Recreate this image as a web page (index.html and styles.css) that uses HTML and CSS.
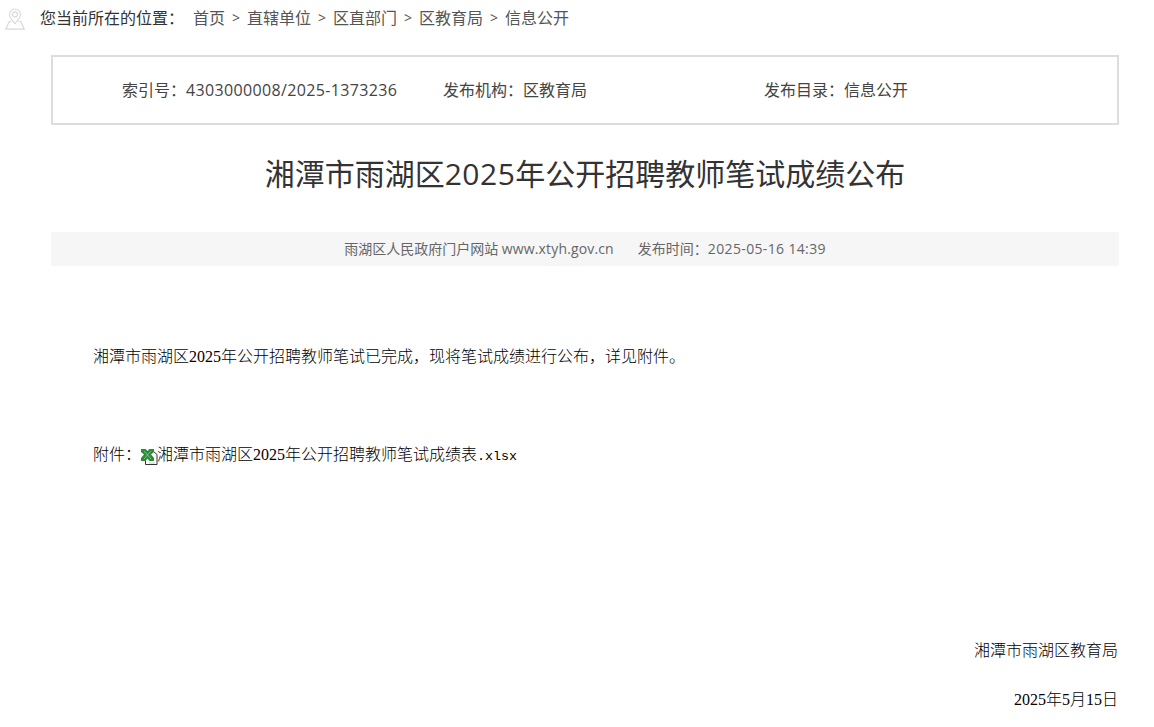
FILE: index.html
```html
<!DOCTYPE html>
<html lang="zh-CN">
<head>
<meta charset="utf-8">
<title>湘潭市雨湖区2025年公开招聘教师笔试成绩公布</title>
<link rel="stylesheet" href="styles.css">
</head>
<body>
<nav class="crumbs">
  <svg class="pin" width="20" height="22" viewBox="0 0 20 22" fill="none" stroke="#d9d9d9" stroke-width="1.2">
    <path d="M10 15.500C7.500 12.500 4.600 9.600 4.600 6.400a5.400 5.400 0 0 1 10.800 0c0 3.200-2.900 6.100-5.400 9.100z"/>
    <circle cx="10" cy="6.400" r="2.500"/>
    <path d="M6.500 13.500H4.200L.8 21.200h18.400l-3.400-7.700h-2.300"/>
  </svg>
  <span class="here">您当前所在的位置：</span>
  <a class="link">首页</a><span class="sep">&gt;</span>
  <a class="link">直辖单位</a><span class="sep">&gt;</span>
  <a class="link">区直部门</a><span class="sep">&gt;</span>
  <a class="link">区教育局</a><span class="sep">&gt;</span>
  <a class="link">信息公开</a>
</nav>
<main class="page">
  <section class="info">
    <div class="cell">索引号：<span class="num">4303000008/2025-1373236</span></div>
    <div class="cell">发布机构：区教育局</div>
    <div class="cell">发布目录：信息公开</div>
  </section>
  <h1 class="title">湘潭市雨湖区<span class="year">2025</span>年公开招聘教师笔试成绩公布</h1>
  <div class="meta">
    <span>雨湖区人民政府门户网站 <span class="site">www.xtyh.gov.cn</span></span>
    <span>发布时间：<span class="stamp">2025-05-16 14:39</span></span>
  </div>
  <article class="content">
    <p class="para">湘潭市雨湖区<span class="lat">2025</span>年公开招聘教师笔试已完成，现将笔试成绩进行公布，详见附件。</p>
    <p class="para attach">附件：<svg class="xls" width="17" height="17" viewBox="0 0 17 17">
        <path d="M4.500 3.500h8l3.500 3v10h-11.500z" fill="#fff" stroke="#333" stroke-width="1"/>
        <path d="M8 15h6" stroke="#c9cfc4" stroke-width="1"/>
        <path d="M0 1h4.500L6.500 3 8.500 1H13v3l-3 2.500L13 10v3H8.500l-2-2.500-2 2.500H0v-3l3-3.500L0 4z" fill="#2c8a38"/>
        <path d="M3 3l7 8M10 3l-7 8" stroke="#8fd08f" stroke-width=".8"/>
      </svg><span class="fname">湘潭市雨湖区<span class="lat">2025</span>年公开招聘教师笔试成绩表<span class="ext">.xlsx</span></span></p>
    <p class="para sign">湘潭市雨湖区教育局</p>
    <p class="para date"><span class="lat">2025</span>年<span class="lat">5</span>月<span class="lat">15</span>日</p>
  </article>
</main>
</body>
</html>
```
FILE: styles.css
```css
html, body {
  margin: 0;
  padding: 0;
  background: #fff;
  overflow: hidden;
}
body {
  font-family: "Open Sans", "Noto Sans CJK SC", sans-serif;
  font-size: 16px;
  color: #333;
}
.crumbs {
  display: flex;
  align-items: center;
  height: 34px;
  padding-left: 5px;
  color: #555;
}
.pin {
  flex: none;
  margin: 4px 15px 0 0;
}
.here {
  color: #333;
  margin-right: 9px;
}
.sep {
  margin: 0 7px;
  width: 8px;
  font-size: 14px;
  text-align: center;
}
.page {
  width: 1068px;
  margin: 21px 0 0 51px;
}
.info {
  display: flex;
  box-sizing: border-box;
  height: 70px;
  align-items: center;
  padding: 0 0 2px 69px;
  border: 2px solid #ddd;
  color: #444;
}
.cell {
  flex: none;
  width: 321px;
}
.num {
  letter-spacing: .35px;
}
.title {
  margin: 27px 0 0;
  height: 46px;
  font-size: 30px;
  line-height: 44px;
  font-weight: 400;
  text-align: center;
  color: #333;
}
.year {
  letter-spacing: .5px;
}
.meta {
  display: flex;
  justify-content: center;
  gap: 24px;
  height: 34px;
  margin-top: 34px;
  background: #f6f6f6;
  font-size: 14px;
  line-height: 33px;
  color: #666;
}
.site {
  letter-spacing: .15px;
}
.stamp {
  letter-spacing: .35px;
}
.content {
  margin-top: 66px;
  color: #000;
  font-weight: 300;
}
.para {
  margin: 0;
  padding-left: 42px;
  line-height: 49px;
  height: 49px;
  white-space: nowrap;
}
.lat {
  font-family: "Liberation Serif", serif;
  font-weight: 400;
}
.ext {
  font-family: "Liberation Mono", monospace;
  font-size: 13.330px;
  font-weight: 400;
}
.attach {
  margin-top: 49px;
}
.xls {
  vertical-align: -5px;
  margin-right: -1px;
}
.sign {
  margin-top: 147px;
  text-align: right;
  padding: 0 1px 0 0;
}
.date {
  text-align: right;
  padding: 0 1px 0 0;
}
```
